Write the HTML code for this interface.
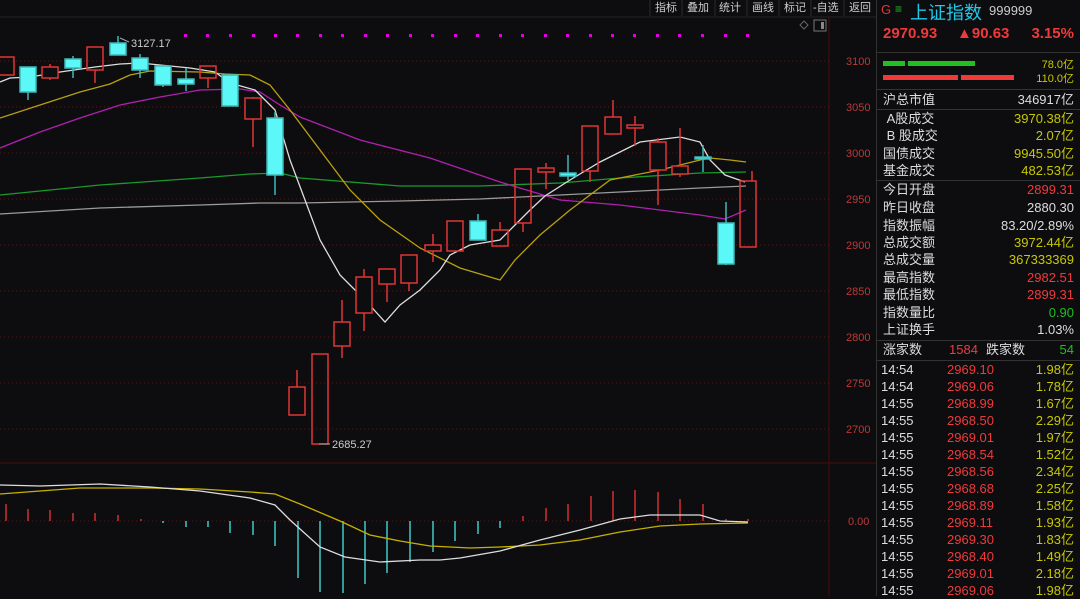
<!DOCTYPE html>
<html><head><meta charset="utf-8"><style>
*{margin:0;padding:0;box-sizing:border-box}
body{width:1080px;height:596px;background:#0d0d10;overflow:hidden;position:relative;font-family:"Liberation Sans","Noto Sans CJK SC",sans-serif;}
#rp{position:absolute;left:876px;top:0;width:204px;height:596px;border-left:1px solid #333;}
.r{position:absolute;left:6px;right:6px;height:18px;font-size:13px;color:#ddd;line-height:18px}
.r span{position:absolute;right:0}
.y{color:#c8c800}.red{color:#f03a3a}.g{color:#1fc01f}.w{color:#ddd}
.sep{position:absolute;left:0;right:0;height:1px;background:#333}
.t{position:absolute;left:4px;right:6px;height:17px;font-size:13px;line-height:17px;color:#ddd}
.t b{font-weight:normal;position:absolute;left:66px;color:#f03a3a}
.t i{font-style:normal;position:absolute;right:0;color:#c8c800}
</style></head><body>
<svg width="876" height="596" style="position:absolute;left:0;top:0" font-family="Liberation Sans, Noto Sans CJK SC, sans-serif">
<rect width="876" height="596" fill="#0d0d10"/>
<!-- toolbar -->
<g font-size="11" fill="#ccc">
<line x1="650" y1="0" x2="650" y2="16" stroke="#2a2a2a"/>
<text x="655" y="11">指标</text><line x1="682" y1="0" x2="682" y2="16" stroke="#2a2a2a"/>
<text x="687" y="11">叠加</text><line x1="715" y1="0" x2="715" y2="16" stroke="#2a2a2a"/>
<text x="719" y="11">统计</text><line x1="747" y1="0" x2="747" y2="16" stroke="#2a2a2a"/>
<text x="752" y="11">画线</text><line x1="779" y1="0" x2="779" y2="16" stroke="#2a2a2a"/>
<text x="784" y="11">标记</text><line x1="811" y1="0" x2="811" y2="16" stroke="#2a2a2a"/>
<text x="813" y="11">-自选</text><line x1="844" y1="0" x2="844" y2="16" stroke="#2a2a2a"/>
<text x="849" y="11">返回</text>
</g>
<line x1="0" y1="17" x2="876" y2="17" stroke="#222"/>
<path d="M804 21 l4 4 -4 4 -4 -4z" fill="none" stroke="#666"/>
<rect x="814" y="20" width="12" height="11" fill="none" stroke="#777"/><rect x="821" y="22" width="3" height="7" fill="#888"/>
<line x1="829" y1="17" x2="829" y2="596" stroke="#4a0a0a"/>
<!-- grid -->
<g stroke="#5a1515" stroke-dasharray="1,3">
<line x1="0" y1="61" x2="829" y2="61"/><line x1="0" y1="107" x2="829" y2="107"/><line x1="0" y1="153" x2="829" y2="153"/><line x1="0" y1="199" x2="829" y2="199"/><line x1="0" y1="245" x2="829" y2="245"/><line x1="0" y1="291" x2="829" y2="291"/><line x1="0" y1="337" x2="829" y2="337"/><line x1="0" y1="383" x2="829" y2="383"/><line x1="0" y1="429" x2="829" y2="429"/>
<line x1="0" y1="521" x2="829" y2="521"/>
</g>
<line x1="0" y1="463" x2="876" y2="463" stroke="#4a0a0a"/>
<g font-size="11" fill="#b83a3a">
<text x="846" y="65">3100</text><text x="846" y="111">3050</text><text x="846" y="157">3000</text><text x="846" y="203">2950</text><text x="846" y="249">2900</text><text x="846" y="295">2850</text><text x="846" y="341">2800</text><text x="846" y="387">2750</text><text x="846" y="433">2700</text><text x="848" y="525">0.00</text>
</g>
<!-- magenta dots -->
<g fill="#e000e0">
<rect x="184" y="34" width="3" height="3"/><rect x="206" y="34" width="3" height="3"/><rect x="229" y="34" width="3" height="3"/><rect x="252" y="34" width="3" height="3"/><rect x="274" y="34" width="3" height="3"/><rect x="296" y="34" width="3" height="3"/><rect x="319" y="34" width="3" height="3"/><rect x="341" y="34" width="3" height="3"/><rect x="364" y="34" width="3" height="3"/><rect x="386" y="34" width="3" height="3"/><rect x="409" y="34" width="3" height="3"/><rect x="431" y="34" width="3" height="3"/><rect x="454" y="34" width="3" height="3"/><rect x="476" y="34" width="3" height="3"/><rect x="499" y="34" width="3" height="3"/><rect x="521" y="34" width="3" height="3"/><rect x="544" y="34" width="3" height="3"/><rect x="566" y="34" width="3" height="3"/><rect x="589" y="34" width="3" height="3"/><rect x="611" y="34" width="3" height="3"/><rect x="633" y="34" width="3" height="3"/><rect x="656" y="34" width="3" height="3"/><rect x="678" y="34" width="3" height="3"/><rect x="701" y="34" width="3" height="3"/><rect x="724" y="34" width="3" height="3"/><rect x="746" y="34" width="3" height="3"/>
</g>
<!-- MAs -->
<g fill="none" stroke-width="1.3">
<polyline stroke="#9a9a9a" points="0,214 100,208 200,205 260,203 300,203 400,201 480,199 560,195 620,192 700,188 746,186"/>
<polyline stroke="#1a9a2a" points="0,195 100,185 200,178 250,174 280,173 300,178 400,186 480,186 560,183 620,178 700,173 746,172"/>
<polyline stroke="#b020b0" points="0,148 40,132 80,118 120,105 160,97 200,90 240,89 260,92 280,105 300,117 360,140 430,158 500,182 560,200 620,205 700,215 725,219 746,210"/>
<polyline stroke="#b8a010" points="0,118 40,105 80,92 110,84 130,75 150,71 200,72 225,74 250,75 270,85 290,110 320,150 350,190 380,220 420,248 460,268 500,280 515,260 540,235 570,210 610,180 660,170 700,160 710,158 730,160 746,162"/>
<polyline stroke="#dddddd" points="0,82 10,78 30,77 60,72 95,67 120,64 140,63 160,65 190,68 215,72 230,83 255,90 275,110 290,160 305,200 320,240 340,275 365,300 385,322 400,305 420,290 440,270 450,255 470,245 500,240 515,225 530,210 545,196 570,180 600,162 640,142 680,137 700,142 710,160 725,175 745,182"/>
</g>
<!-- candles -->
<g stroke-width="1.5">
<g stroke="#e03535" fill="none">
<rect x="-2" y="57" width="16" height="18"/>
<line x1="50" y1="64" x2="50" y2="80"/><rect x="42" y="67" width="16" height="11" fill="#0d0d10"/>
<line x1="95" y1="70" x2="95" y2="83"/><rect x="87" y="47" width="16" height="23"/>
<line x1="208" y1="78" x2="208" y2="88"/><rect x="200" y="66" width="16" height="12"/>
<line x1="253" y1="97" x2="253" y2="147"/><rect x="245" y="98" width="16" height="21" fill="#0d0d10"/>
<line x1="297" y1="370" x2="297" y2="387"/><rect x="289" y="387" width="16" height="28"/>
<rect x="312" y="354" width="16" height="90"/>
<line x1="342" y1="300" x2="342" y2="358"/><rect x="334" y="322" width="16" height="24" fill="#0d0d10"/>
<line x1="364" y1="269" x2="364" y2="331"/><rect x="356" y="277" width="16" height="36" fill="#0d0d10"/>
<line x1="387" y1="284" x2="387" y2="302"/><rect x="379" y="269" width="16" height="15"/>
<line x1="409" y1="283" x2="409" y2="291"/><rect x="401" y="255" width="16" height="28"/>
<line x1="433" y1="234" x2="433" y2="262"/><rect x="425" y="245" width="16" height="6" fill="#0d0d10"/>
<rect x="447" y="221" width="16" height="30"/>
<line x1="500" y1="222" x2="500" y2="230"/><rect x="492" y="230" width="16" height="16"/>
<line x1="523" y1="223" x2="523" y2="232"/><rect x="515" y="169" width="16" height="54"/>
<line x1="546" y1="163" x2="546" y2="189"/><rect x="538" y="168" width="16" height="4" fill="#0d0d10"/>
<line x1="590" y1="171" x2="590" y2="182"/><rect x="582" y="126" width="16" height="45"/>
<line x1="613" y1="100" x2="613" y2="117"/><rect x="605" y="117" width="16" height="17"/>
<line x1="635" y1="116" x2="635" y2="146"/><rect x="627" y="125" width="16" height="3" fill="#0d0d10"/>
<line x1="658" y1="138" x2="658" y2="205"/><rect x="650" y="142" width="16" height="28" fill="#0d0d10"/>
<line x1="680" y1="128" x2="680" y2="177"/><rect x="672" y="166" width="16" height="8" fill="#0d0d10"/>
<line x1="752" y1="171" x2="752" y2="181"/><rect x="740" y="181" width="16" height="66"/>
</g>
<g stroke="#40b8b8" fill="#5cf8f8">
<line x1="28" y1="92" x2="28" y2="100"/><rect x="20" y="67" width="16" height="25"/>
<line x1="73" y1="56" x2="73" y2="78"/><rect x="65" y="59" width="16" height="9"/>
<line x1="118" y1="36" x2="118" y2="43"/><rect x="110" y="43" width="16" height="12"/>
<line x1="140" y1="54" x2="140" y2="78"/><rect x="132" y="58" width="16" height="12"/>
<line x1="163" y1="85" x2="163" y2="87"/><rect x="155" y="66" width="16" height="19"/>
<line x1="186" y1="68" x2="186" y2="91"/><rect x="178" y="79" width="16" height="5"/>
<rect x="222" y="75" width="16" height="31"/>
<line x1="275" y1="112" x2="275" y2="195"/><rect x="267" y="118" width="16" height="57"/>
<line x1="478" y1="214" x2="478" y2="240"/><rect x="470" y="221" width="16" height="19"/>
<line x1="568" y1="155" x2="568" y2="180"/><rect x="560" y="173" width="16" height="3"/>
<line x1="703" y1="145" x2="703" y2="172"/><rect x="695" y="157" width="16" height="2"/>
<line x1="726" y1="202" x2="726" y2="265"/><rect x="718" y="223" width="16" height="41"/>
</g>
</g>
<g font-size="11" fill="#ccc">
<text x="131" y="47">3127.17</text><path d="M120 38 L129 42" stroke="#aaa"/>
<text x="332" y="448">2685.27</text><path d="M319 444 L330 444" stroke="#aaa"/>
</g>
<!-- MACD -->
<g stroke-width="1.5">
<g stroke="#d03030">
<line x1="6" y1="504" x2="6" y2="521"/><line x1="28" y1="509" x2="28" y2="521"/><line x1="50" y1="510" x2="50" y2="521"/><line x1="73" y1="513" x2="73" y2="521"/><line x1="95" y1="513" x2="95" y2="521"/><line x1="118" y1="515" x2="118" y2="521"/><line x1="141" y1="519" x2="141" y2="521"/>
<line x1="523" y1="516" x2="523" y2="521"/><line x1="546" y1="508" x2="546" y2="521"/><line x1="568" y1="504" x2="568" y2="521"/><line x1="591" y1="496" x2="591" y2="521"/><line x1="613" y1="491" x2="613" y2="521"/><line x1="635" y1="490" x2="635" y2="521"/><line x1="658" y1="492" x2="658" y2="521"/><line x1="680" y1="499" x2="680" y2="521"/><line x1="703" y1="504" x2="703" y2="521"/><line x1="726" y1="519" x2="726" y2="521"/><line x1="748" y1="519" x2="748" y2="521"/>
</g>
<g stroke="#40c8c8">
<line x1="163" y1="521" x2="163" y2="523"/><line x1="186" y1="521" x2="186" y2="527"/><line x1="208" y1="521" x2="208" y2="527"/><line x1="230" y1="521" x2="230" y2="533"/><line x1="253" y1="521" x2="253" y2="535"/><line x1="275" y1="521" x2="275" y2="546"/><line x1="298" y1="521" x2="298" y2="578"/><line x1="320" y1="521" x2="320" y2="592"/><line x1="343" y1="521" x2="343" y2="593"/><line x1="365" y1="521" x2="365" y2="584"/><line x1="387" y1="521" x2="387" y2="573"/><line x1="410" y1="521" x2="410" y2="562"/><line x1="433" y1="521" x2="433" y2="552"/><line x1="455" y1="521" x2="455" y2="541"/><line x1="478" y1="521" x2="478" y2="534"/><line x1="500" y1="521" x2="500" y2="528"/>
</g>
</g>
<g fill="none" stroke-width="1.3">
<polyline stroke="#c8b000" points="0,494 40,491 80,488 150,488 200,489 250,492 275,494 300,504 340,521 370,535 400,541 430,546 470,548 500,547 540,545 580,540 620,532 660,526 700,524 748,523"/>
<polyline stroke="#dddddd" points="0,485 40,486 100,484 150,487 200,491 250,498 275,505 290,520 320,547 345,557 380,562 420,560 440,560 460,558 500,551 540,540 580,530 620,519 650,515 700,515 720,521 748,522"/>
</g>
</svg>
<div id="rp">
<div style="position:absolute;left:4px;top:2px;font-size:13px;color:#e03535">G</div>
<div style="position:absolute;left:18px;top:2px;font-size:12px;color:#1fc01f">≡</div>
<div style="position:absolute;left:33px;top:-1px;font-size:18px;color:#21c8e8">上证指数</div>
<div style="position:absolute;left:112px;top:3px;font-size:13px;color:#ccc">999999</div>
<div style="position:absolute;left:6px;top:25px;font-size:15px;color:#f03a3a;font-weight:bold">2970.93</div>
<div style="position:absolute;left:80px;top:25px;font-size:15px;color:#f03a3a;font-weight:bold">▲90.63</div>
<div style="position:absolute;right:6px;top:25px;font-size:15px;color:#f03a3a;font-weight:bold">3.15%</div>
<div class="sep" style="top:52px"></div>
<div style="position:absolute;left:6px;top:61px;width:22px;height:5px;background:#1fc01f"></div>
<div style="position:absolute;left:31px;top:61px;width:67px;height:5px;background:#1fc01f"></div>
<div style="position:absolute;left:6px;top:75px;width:75px;height:5px;background:#f03a3a"></div>
<div style="position:absolute;left:84px;top:75px;width:53px;height:5px;background:#f03a3a"></div>
<div style="position:absolute;right:6px;top:56px;font-size:11px;color:#c8c800">78.0亿</div>
<div style="position:absolute;right:6px;top:70px;font-size:11px;color:#c8c800">110.0亿</div>
<div class="sep" style="top:89px"></div>
<div class="r" style="top:91px">沪总市值<span class="w">346917亿</span></div>
<div class="sep" style="top:109px"></div>
<div class="r" style="top:110px">&nbsp;A股成交<span class="y">3970.38亿</span></div>
<div class="r" style="top:127px">&nbsp;B 股成交<span class="y">2.07亿</span></div>
<div class="r" style="top:145px">国债成交<span class="y">9945.50亿</span></div>
<div class="r" style="top:162px">基金成交<span class="y">482.53亿</span></div>
<div class="sep" style="top:180px"></div>
<div class="r" style="top:181px">今日开盘<span class="red">2899.31</span></div>
<div class="r" style="top:199px">昨日收盘<span class="w">2880.30</span></div>
<div class="r" style="top:217px">指数振幅<span class="w">83.20/2.89%</span></div>
<div class="r" style="top:234px">总成交额<span class="y">3972.44亿</span></div>
<div class="r" style="top:251px">总成交量<span class="y">367333369</span></div>
<div class="r" style="top:269px">最高指数<span class="red">2982.51</span></div>
<div class="r" style="top:286px">最低指数<span class="red">2899.31</span></div>
<div class="r" style="top:304px">指数量比<span class="g">0.90</span></div>
<div class="r" style="top:321px">上证换手<span class="w">1.03%</span></div>
<div class="sep" style="top:340px"></div>
<div class="r" style="top:341px">涨家数<b style="font-weight:normal;position:absolute;left:66px;color:#f03a3a">1584</b><b style="font-weight:normal;position:absolute;left:103px;color:#ddd">跌家数</b><span class="g">54</span></div>
<div class="sep" style="top:360px"></div>
<div class="t" style="top:361px">14:54<b>2969.10</b><i>1.98亿</i></div>
<div class="t" style="top:378px">14:54<b>2969.06</b><i>1.78亿</i></div>
<div class="t" style="top:395px">14:55<b>2968.99</b><i>1.67亿</i></div>
<div class="t" style="top:412px">14:55<b>2968.50</b><i>2.29亿</i></div>
<div class="t" style="top:429px">14:55<b>2969.01</b><i>1.97亿</i></div>
<div class="t" style="top:446px">14:55<b>2968.54</b><i>1.52亿</i></div>
<div class="t" style="top:463px">14:55<b>2968.56</b><i>2.34亿</i></div>
<div class="t" style="top:480px">14:55<b>2968.68</b><i>2.25亿</i></div>
<div class="t" style="top:497px">14:55<b>2968.89</b><i>1.58亿</i></div>
<div class="t" style="top:514px">14:55<b>2969.11</b><i>1.93亿</i></div>
<div class="t" style="top:531px">14:55<b>2969.30</b><i>1.83亿</i></div>
<div class="t" style="top:548px">14:55<b>2968.40</b><i>1.49亿</i></div>
<div class="t" style="top:565px">14:55<b>2969.01</b><i>2.18亿</i></div>
<div class="t" style="top:582px">14:55<b>2969.06</b><i>1.98亿</i></div>
</div>
</body></html>
